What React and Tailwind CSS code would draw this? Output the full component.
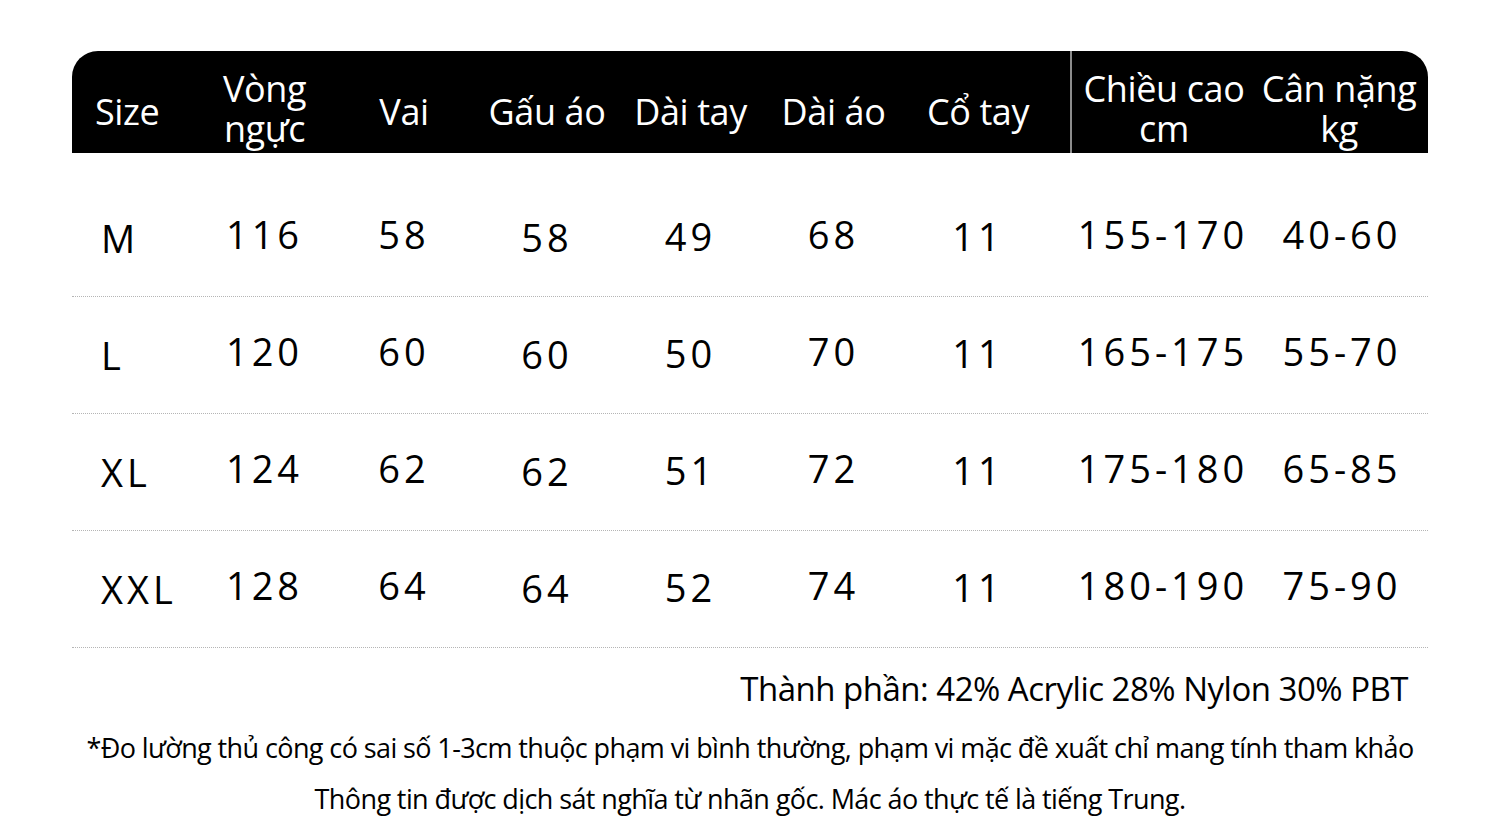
import React from 'react';

const COLS = 'grid grid-cols-[124px_137px_142px_144px_143px_143px_165px_186px_172px]';

const rows = [
  ['M', '116', '58', '58', '49', '68', '11', '155-170', '40-60'],
  ['L', '120', '60', '60', '50', '70', '11', '165-175', '55-70'],
  ['XL', '124', '62', '62', '51', '72', '11', '175-180', '65-85'],
  ['XXL', '128', '64', '64', '52', '74', '11', '180-190', '75-90'],
];

// small vertical nudges per column, as in the source picture
const nudge = ['translate-y-[4px]', '', '', 'translate-y-[3px]', 'translate-y-[2px]', '', 'translate-y-[2px]', '', ''];

function HeaderCell({ children, className = '', two = false }) {
  return (
    <div
      className={`flex items-center justify-center text-center leading-[40px] ${two ? 'pt-[14px]' : 'pt-[20px]'} ${className}`}
    >
      {children}
    </div>
  );
}

export default function App() {
  return (
    <div
      className="w-[1500px] h-[827px] bg-white overflow-hidden text-black"
      style={{ fontFamily: '"Open Sans", "Noto Sans", sans-serif' }}
    >
      <div className="px-[72px] pt-[51px]">
        {/* Header */}
        <div className={`${COLS} h-[102px] bg-black rounded-t-[26px] text-white text-[36px] tracking-[-0.4px]`}>
          <HeaderCell className="justify-start pl-[23px]">Size</HeaderCell>
          <HeaderCell two>Vòng<br />ngực</HeaderCell>
          <HeaderCell>Vai</HeaderCell>
          <HeaderCell>Gấu áo</HeaderCell>
          <HeaderCell>Dài tay</HeaderCell>
          <HeaderCell>Dài áo</HeaderCell>
          <HeaderCell className="pr-[19px]">Cổ tay</HeaderCell>
          <HeaderCell two className="border-l-2 border-[#8c8c8c] whitespace-nowrap">Chiều cao<br />cm</HeaderCell>
          <HeaderCell two className="pr-[6px] whitespace-nowrap">Cân nặng<br />kg</HeaderCell>
        </div>

        {/* Body */}
        <div className="mt-[27px]">
          {rows.map((r) => (
            <div
              key={r[0]}
              className={`${COLS} h-[117px] border-b border-dotted border-[#b5b5b5] pb-[8px] text-[38px] tracking-[4px] leading-none`}
            >
              {r.map((v, i) => (
                <div
                  key={i}
                  className={`flex items-center ${i === 0 ? 'justify-start pl-[29px]' : 'justify-center'} ${i === 6 ? 'pr-[19px]' : ''} ${nudge[i]}`}
                >
                  {v}
                </div>
              ))}
            </div>
          ))}
        </div>

        {/* Notes */}
        <div className="mt-[21px] text-right pr-[20px] text-[33px] font-medium leading-[40px] tracking-[-0.5px]">
          Thành phần: 42% Acrylic 28% Nylon 30% PBT
        </div>
      </div>
      <div className="mt-[13px] text-center text-[27px] font-medium leading-[51px] tracking-[-0.6px]">
        <div>*Đo lường thủ công có sai số 1-3cm thuộc phạm vi bình thường, phạm vi mặc đề xuất chỉ mang tính tham khảo</div>
        <div>Thông tin được dịch sát nghĩa từ nhãn gốc. Mác áo thực tế là tiếng Trung.</div>
      </div>
    </div>
  );
}
